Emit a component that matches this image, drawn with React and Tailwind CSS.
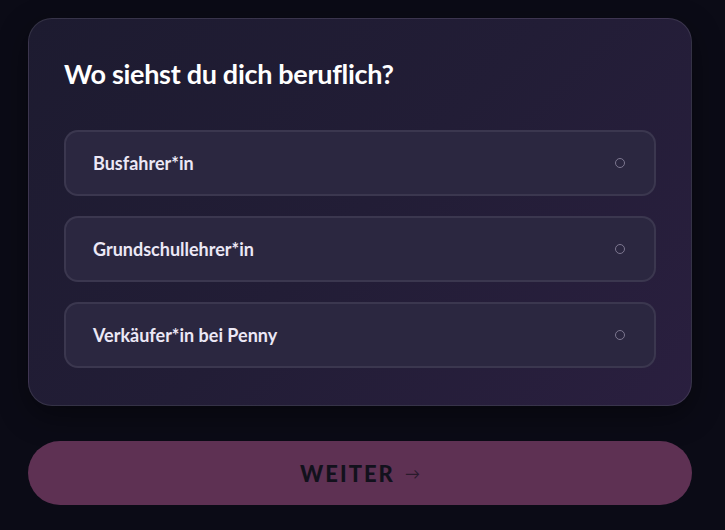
const options = ["Busfahrer*in", "Grundschullehrer*in", "Verkäufer*in bei Penny"];

export default function App() {
  return (
    <div
      className="min-h-[530px] w-full bg-[#0b0b16] pl-[28px] pr-[33px] pt-[18px]"
      style={{ fontFamily: "Lato, 'Noto Sans', sans-serif" }}
    >
      {/* question card */}
      <div className="rounded-[24px] border border-white/10 bg-[linear-gradient(135deg,#1d1b30_0%,#221d36_50%,#2a1f3f_100%)] px-[35px] pt-[37px] pb-[37px] shadow-[0_10px_30px_rgba(0,0,0,0.4)]">
        <h2 className="text-[27px] font-bold leading-[36px] tracking-[-0.3px] text-white">
          Wo siehst du dich beruflich?
        </h2>
        <div className="mt-[38px] flex flex-col gap-[20px]">
          {options.map((o) => (
            <button
              key={o}
              className="flex h-[66px] items-center justify-between rounded-[14px] border-2 border-white/[0.08] bg-[#2b2740] pl-[27px] pr-[29px] text-left"
            >
              <span className="text-[18px] font-bold text-[#ece8f6]">{o}</span>
              <span className="h-[10px] w-[10px] rounded-full border border-[#7d7790]" />
            </button>
          ))}
        </div>
      </div>

      {/* next button */}
      <button className="mt-[35px] flex h-[64px] w-full items-center justify-center gap-[10px] rounded-full bg-[#5e3153]">
        <span className="text-[22px] font-black tracking-[2px] text-[#12111c]">WEITER</span>
        <span className="text-[15px] text-[#2a1a2c]">→</span>
      </button>
    </div>
  );
}
